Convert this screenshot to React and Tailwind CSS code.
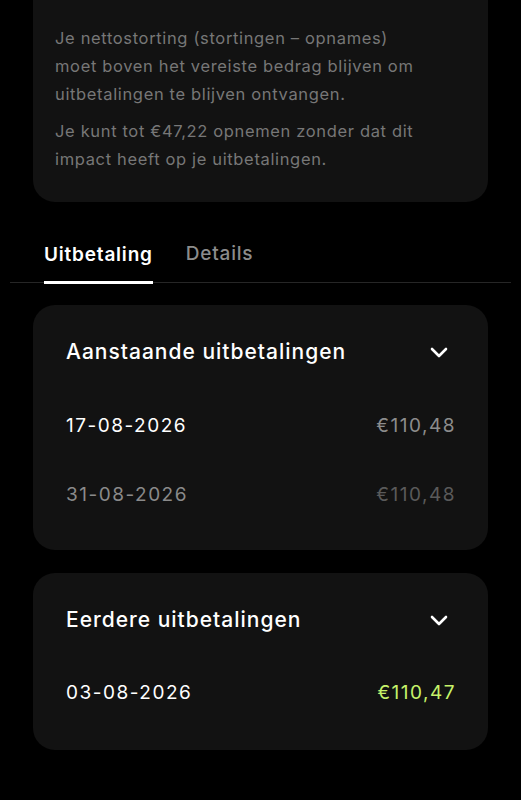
import React from 'react';

function Chevron() {
    return (
        <svg viewBox="0 0 24 24" className="w-6 h-6" fill="none" stroke="white" strokeWidth="2.6" strokeLinecap="round" strokeLinejoin="round">
            <path d="M5 9l7 7 7-7" />
        </svg>
    );
}

function PayoutCard({ title, rows, className = '' }) {
    return (
        <div className={`mx-[33px] rounded-[22px] bg-[#121212] pl-[33px] pr-[32px] ${className}`}>
            <div className="flex items-center justify-between h-[28px]">
                <span className="text-[21px] leading-[28px] font-medium tracking-[1px] text-white">{title}</span>
                <span className="mr-[5px]"><Chevron /></span>
            </div>
            {rows.map((row, i) => (
                <div key={i} className={`flex items-center justify-between text-[19px] leading-[26px] tracking-[1.5px] ${row.mt}`}>
                    <span className={row.dateColor}>{row.date}</span>
                    <span className={row.amountColor}>{row.amount}</span>
                </div>
            ))}
        </div>
    );
}

export default function App() {
    return (
        <div className="min-h-[800px] bg-black pb-[50px]" style={{ fontFamily: 'Inter, "Noto Sans", sans-serif' }}>
            <div className="mx-[33px] rounded-b-[22px] bg-[#121212] pl-[22px] pr-[66px] pt-[24px] pb-[29px] text-[16.5px] leading-[28px] tracking-[0.65px] text-[#777777]">
                <p>
                    Je nettostorting (stortingen – opnames) moet boven het vereiste bedrag blijven om uitbetalingen te blijven ontvangen.
                </p>
                <p className="mt-[9px]">
                    Je kunt tot €47,22 opnemen zonder dat dit impact heeft op je uitbetalingen.
                </p>
            </div>

            <div className="mx-[10px] mt-[40px] flex gap-[33px] border-b border-[#262626] pl-[34px]">
                <button className="-mb-[2px] border-b-[3px] border-white pb-[14px] text-[19px] leading-[24px] font-semibold tracking-[0.8px] text-white">
                    Uitbetaling
                </button>
                <button className="pb-[16px] text-[19px] leading-[24px] font-medium tracking-[0.8px] text-[#8c8c8c]">
                    Details
                </button>
            </div>

            <PayoutCard
                className="mt-[22px] pt-[33px] pb-[42px]"
                title="Aanstaande uitbetalingen"
                rows={[
                    { date: '17-08-2026', amount: '€110,48', dateColor: 'text-white', amountColor: 'text-[#8c8c8c]', mt: 'mt-[47px]' },
                    { date: '31-08-2026', amount: '€110,48', dateColor: 'text-[#8a8a8a]', amountColor: 'text-[#5a5a5a]', mt: 'mt-[43px]' },
                ]}
            />

            <PayoutCard
                className="mt-[23px] pt-[33px] pb-[44px]"
                title="Eerdere uitbetalingen"
                rows={[
                    { date: '03-08-2026', amount: '€110,47', dateColor: 'text-white', amountColor: 'text-[#c6f26a]', mt: 'mt-[46px]' },
                ]}
            />
        </div>
    );
}
